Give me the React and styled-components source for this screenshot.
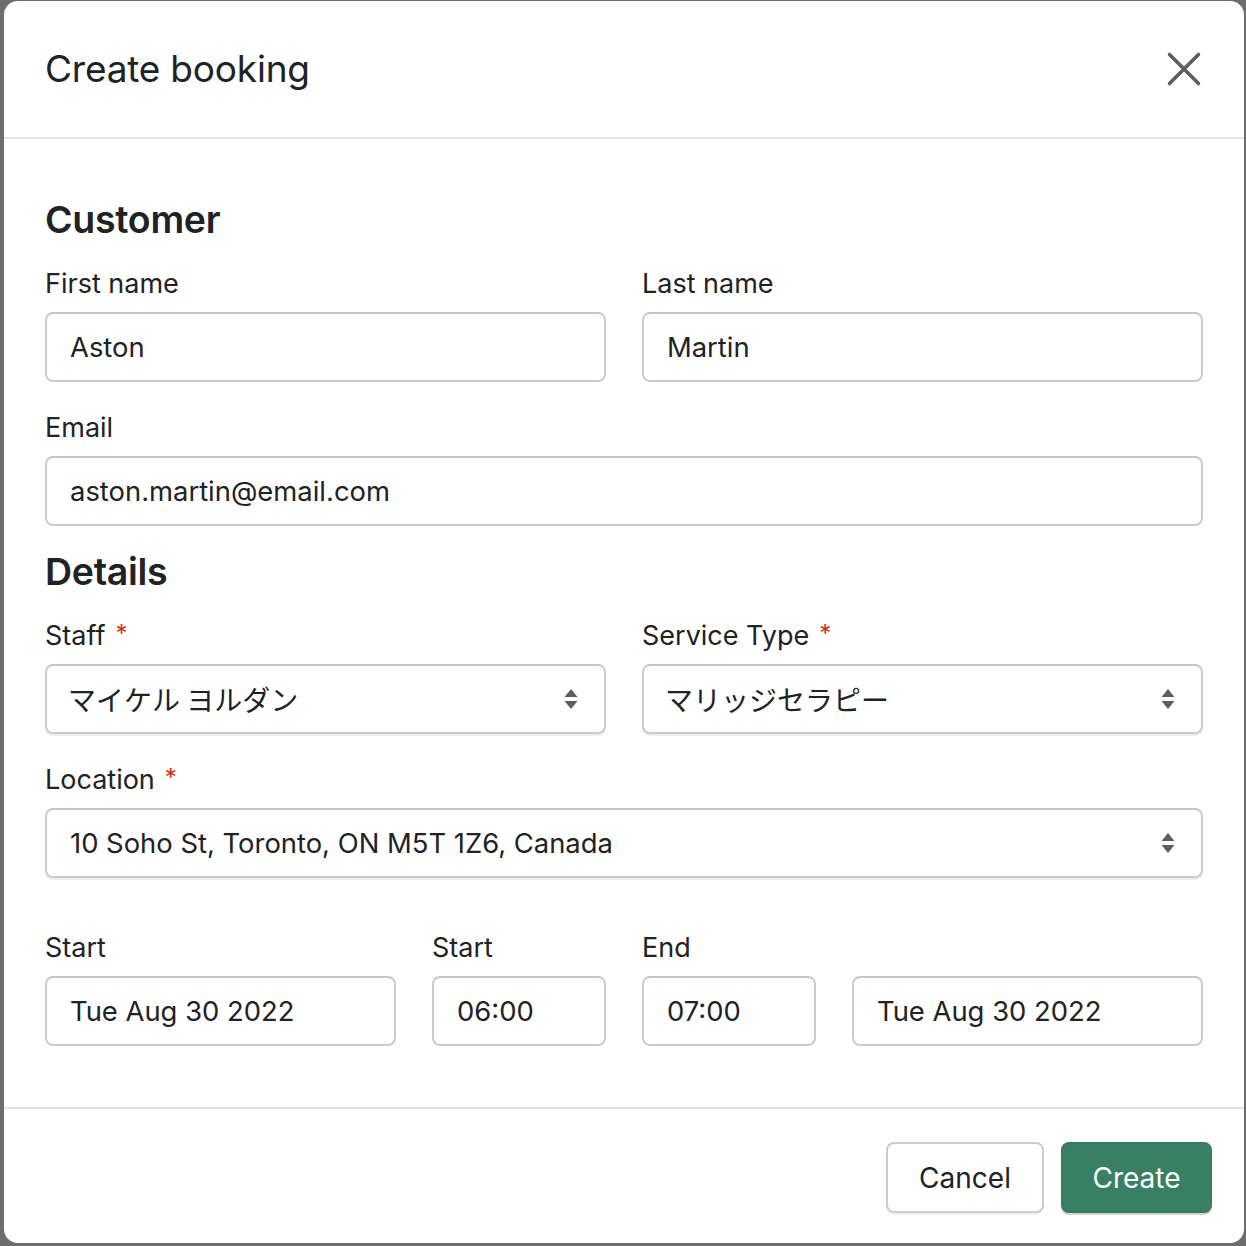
import styled, { createGlobalStyle } from 'styled-components';

const GlobalStyle = createGlobalStyle`
  html, body {
    margin: 0;
    padding: 0;
    background: #6d6d6d;
  }
  body {
    font-family: Inter, "Noto Sans CJK JP", sans-serif;
    color: #202223;
  }
`;

const Backdrop = styled.div`
  padding: 1px 2px 1px 4px;
  min-height: 1246px;
  box-sizing: border-box;
`;

const Modal = styled.div`
  width: 1240px;
  background: #ffffff;
  border-radius: 14px;
  overflow: hidden;
`;

const Header = styled.div`
  height: 136px;
  display: flex;
  align-items: center;
  justify-content: space-between;
  padding: 0 40px 0 41px;
  border-bottom: 2px solid #e1e3e5;
`;

const Title = styled.h1`
  margin: 0;
  font-size: 37px;
  font-weight: 400;
  letter-spacing: -0.2px;
  line-height: 48px;
`;

const CloseButton = styled.button`
  width: 40px;
  height: 40px;
  padding: 0;
  border: 0;
  background: none;
  display: flex;
  align-items: center;
  justify-content: center;
  margin-top: 0;
`;

const Body = styled.div`
  padding: 57px 41px 61px;
  display: flex;
  flex-direction: column;
`;

const SectionTitle = styled.h2`
  margin: 0 0 21px;
  font-size: 37.5px;
  font-weight: 600;
  line-height: 48px;
  letter-spacing: -0.3px;
  ${(p) => p.$spaced && 'margin-top: 22px;'}
`;

const Row = styled.div`
  display: grid;
  grid-template-columns: ${(p) => p.$cols || '1fr 1fr'};
  column-gap: 36px;
  & + & {
    margin-top: 27px;
  }
  ${(p) => p.$gapTop && `margin-top: ${p.$gapTop}px !important;`}
`;

const Field = styled.div`
  display: flex;
  flex-direction: column;
`;

const Label = styled.label`
  font-size: 27px;
  line-height: 36px;
  height: 36px;
  margin-bottom: 11px;
  white-space: nowrap;
  position: relative;
  top: 1px;
`;

const Required = styled.span`
  color: #d72c0d;
  font-size: 24px;
  margin-left: 10px;
  position: relative;
  top: -3px;
`;

const Box = styled.div`
  height: 70px;
  box-sizing: border-box;
  border: 2px solid #c9cccf;
  border-top-color: #c4c6ca;
  border-radius: 8px;
  display: flex;
  align-items: center;
  padding: 0 24px 0 23px;
  font-size: 27px;
  background: #fff;
  ${(p) =>
    p.$select &&
    `
    box-shadow: 0 2px 1px rgba(0, 0, 0, 0.08);
    justify-content: space-between;
    padding-right: 26px;
  `}
`;

const Value = styled.span`
  font-size: ${(p) => (p.$jp ? '28px' : '27.4px')};
  font-family: ${(p) =>
    p.$jp ? '"Noto Sans CJK JP", sans-serif' : 'Inter, sans-serif'};
  white-space: nowrap;
  ${(p) => p.$jp && 'margin-left: -2px;'}
`;

const Footer = styled.div`
  border-top: 2px solid #e1e3e5;
  height: 136px;
  box-sizing: border-box;
  display: flex;
  align-items: center;
  justify-content: flex-end;
  gap: 17px;
  padding: 3px 32px 0;
`;

const Button = styled.button`
  height: 71px;
  box-sizing: border-box;
  border-radius: 8px;
  font-family: Inter, sans-serif;
  font-size: 28px;
  padding: 0 ${(p) => (p.$primary ? '29.5px' : '31px')};
  border: 2px solid ${(p) => (p.$primary ? '#367d60' : '#c9cccf')};
  background: ${(p) => (p.$primary ? '#387f63' : '#ffffff')};
  color: ${(p) => (p.$primary ? '#ffffff' : '#202223')};
  box-shadow: ${(p) =>
    p.$primary
      ? '0 2px 0 rgba(0, 0, 0, 0.18)'
      : '0 2px 1px rgba(0, 0, 0, 0.06)'};
`;

function CloseIcon() {
  return (
    <svg width="36" height="36" viewBox="0 0 36 36" fill="none">
      <path
        d="M3.5 3.5 L32.5 32.5 M32.5 3.5 L3.5 32.5"
        stroke="#5c5f62"
        strokeWidth="3.6"
        strokeLinecap="round"
      />
    </svg>
  );
}

function SelectArrows() {
  return (
    <svg width="14" height="22" viewBox="0 0 14 22">
      <path d="M7 1 L13.5 9 H0.5 Z" fill="#5c5f62" />
      <path d="M7 21 L13.5 13 H0.5 Z" fill="#5c5f62" />
    </svg>
  );
}

function TextField({ label, value, required }) {
  return (
    <Field>
      <Label>
        {label}
        {required && <Required>*</Required>}
      </Label>
      <Box>
        <Value>{value}</Value>
      </Box>
    </Field>
  );
}

function SelectField({ label, value, jp }) {
  return (
    <Field>
      <Label>
        {label}
        <Required>*</Required>
      </Label>
      <Box $select>
        <Value $jp={jp}>{value}</Value>
        <SelectArrows />
      </Box>
    </Field>
  );
}

export default function App() {
  return (
    <>
      <GlobalStyle />
      <Backdrop>
        <Modal>
          <Header>
            <Title>Create booking</Title>
            <CloseButton aria-label="Close">
              <CloseIcon />
            </CloseButton>
          </Header>
          <Body>
            <SectionTitle>Customer</SectionTitle>
            <Row>
              <TextField label="First name" value="Aston" />
              <TextField label="Last name" value="Martin" />
            </Row>
            <Row $cols="1fr">
              <TextField label="Email" value="aston.martin@email.com" />
            </Row>
            <SectionTitle $spaced>Details</SectionTitle>
            <Row>
              <SelectField label="Staff" value="マイケル ヨルダン" jp />
              <SelectField label="Service Type" value="マリッジセラピー" jp />
            </Row>
            <Row $cols="1fr">
              <SelectField
                label="Location"
                value="10 Soho St, Toronto, ON M5T 1Z6, Canada"
              />
            </Row>
            <Row $cols="351px 174px 174px 351px" $gapTop={51}>
              <TextField label="Start" value="Tue Aug 30 2022" />
              <TextField label="Start" value="06:00" />
              <TextField label="End" value="07:00" />
              <TextField label="" value="Tue Aug 30 2022" />
            </Row>
          </Body>
          <Footer>
            <Button>Cancel</Button>
            <Button $primary>Create</Button>
          </Footer>
        </Modal>
      </Backdrop>
    </>
  );
}
